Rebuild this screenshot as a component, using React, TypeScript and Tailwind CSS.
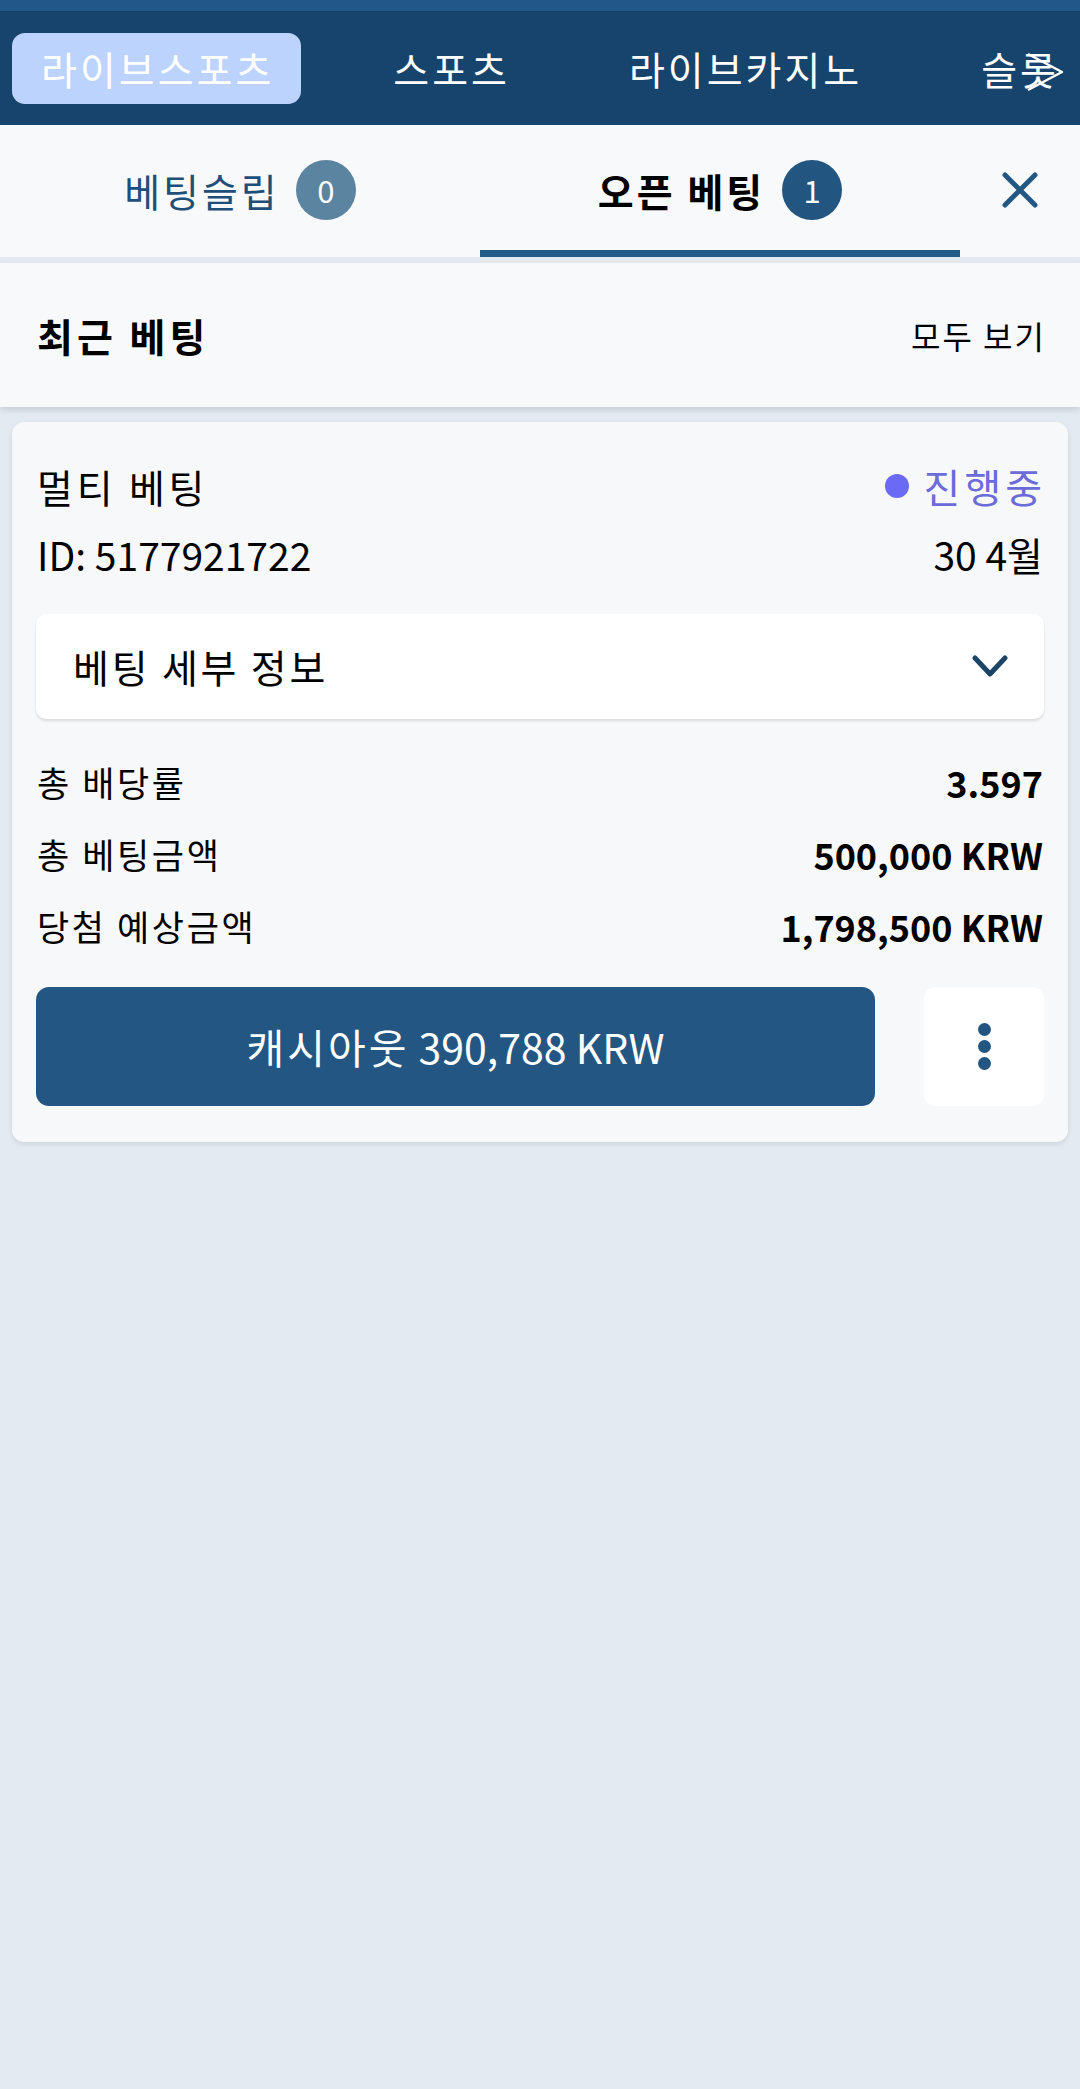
const font = { fontFamily: '"Noto Sans CJK KR", "Noto Sans", sans-serif' };

function NavBar() {
  const items = ["스포츠", "라이브카지노", "슬롯"];
  return (
    <div className="relative bg-[#17446c] border-t-[11px] border-[#22578a] h-[125px] overflow-hidden">
      <div className="flex items-center h-full pl-[12px] whitespace-nowrap text-white text-[39px] tracking-[3px]">
        <div className="h-[71px] pl-[29px] pr-[27px] flex items-center rounded-[13px] bg-[#bcd3fd]">
          라이브스포츠
        </div>
        <div className="flex items-center gap-[119px] ml-[92px]">
          {items.map((item) => (
            <span key={item}>{item}</span>
          ))}
        </div>
      </div>
      <svg
        className="absolute right-[16px] top-[41px]"
        width="40"
        height="40"
        viewBox="0 0 40 40"
        fill="none"
      >
        <path d="M4 2 L38 20 L4 38" stroke="white" strokeWidth="2.5" strokeLinejoin="round" />
      </svg>
    </div>
  );
}

function Badge({ n, active }: { n: number; active: boolean }) {
  return (
    <span
      className={
        active
          ? "w-[60px] h-[60px] rounded-full bg-[#22557f] text-white text-[31px] font-normal tracking-normal flex items-center justify-center"
          : "w-[60px] h-[60px] rounded-full bg-[#5b84a0] text-white text-[31px] font-normal tracking-normal flex items-center justify-center"
      }
    >
      {n}
    </span>
  );
}

function Tabs() {
  return (
    <div className="flex bg-[#f8f9fa] h-[132px]">
      <div className="w-[480px] flex items-center justify-center gap-[16px] text-[39px] tracking-[3px] text-[#1f4e79] pb-[2px]">
        <span>베팅슬립</span>
        <Badge n={0} active={false} />
      </div>
      <div className="w-[480px] relative flex items-center justify-center gap-[17px] text-[39px] tracking-[3px] font-bold text-black pb-[2px]">
        <span>오픈 베팅</span>
        <Badge n={1} active={true} />
        <div className="absolute left-0 right-0 bottom-0 h-[7px] bg-[#245a86]" />
      </div>
      <div className="flex-1 flex items-center justify-center pb-[2px]">
        <svg width="36" height="36" viewBox="0 0 36 36" fill="none">
          <path d="M3 3 L33 33 M33 3 L3 33" stroke="#235783" strokeWidth="5" strokeLinecap="round" />
        </svg>
      </div>
    </div>
  );
}

function Row({ label, value }: { label: string; value: string }) {
  return (
    <div className="h-[72px] flex items-center justify-between text-black">
      <span className="text-[35px] tracking-[2.6px]">{label}</span>
      <span className="text-[36px] font-bold">{value}</span>
    </div>
  );
}

export default function App() {
  return (
    <div className="min-h-[2089px] bg-[#e3eaf2]" style={font}>
      <NavBar />
      <Tabs />
      <div className="mt-[6px] h-[144px] bg-[#f8f9fa] shadow-[0_3px_6px_rgba(0,0,0,0.12)] flex items-center justify-between pl-[37px] pr-[34px]">
        <span className="text-[39px] tracking-[4px] font-bold text-black">최근 베팅</span>
        <span className="text-[32px] tracking-[2px] text-black">모두 보기</span>
      </div>

      <div className="mx-[12px] mt-[15px] bg-[#f7f8f9] rounded-[12px] shadow-[0_2px_5px_rgba(0,0,0,0.1)] px-[24px] pt-[30px] pb-[36px]">
        <div className="h-[68px] flex items-center justify-between">
          <span className="text-[39px] tracking-[3.8px] text-black pl-[1px]">멀티 베팅</span>
          <span className="flex items-center gap-[15px] text-[40px] tracking-[4px] text-[#6b6bd9] -mr-[2px]">
            <span className="w-[24px] h-[24px] rounded-full bg-[#6a6af7]" />
            진행중
          </span>
        </div>
        <div className="h-[68px] flex items-center justify-between text-[39px] text-black">
          <span className="pl-[1px]">ID: 5177921722</span>
          <span className="pr-[1px]">30 4월</span>
        </div>

        <div className="mt-[26px] h-[105px] bg-white rounded-[10px] shadow-[0_2px_3px_rgba(0,0,0,0.12)] flex items-center justify-between pl-[37px] pr-[36px]">
          <span className="text-[39px] tracking-[2.8px] text-black">베팅 세부 정보</span>
          <svg width="36" height="24" viewBox="0 0 36 24" fill="none">
            <path d="M3 3 L18 19 L33 3" stroke="#1b4467" strokeWidth="5" strokeLinecap="round" strokeLinejoin="round" />
          </svg>
        </div>

        <div className="mt-[27px] pl-[1px] pr-[1px]">
          <Row label="총 배당률" value="3.597" />
          <Row label="총 베팅금액" value="500,000 KRW" />
          <Row label="당첨 예상금액" value="1,798,500 KRW" />
        </div>

        <div className="mt-[25px] flex items-center gap-[49px]">
          <button className="w-[839px] h-[119px] rounded-[13px] bg-[#235682] text-white text-[41px]">
            <span className="tracking-[3px]">캐시아웃</span> 390,788 KRW
          </button>
          <button className="w-[120px] h-[119px] rounded-[12px] bg-white flex flex-col items-center justify-center gap-[4px]">
            <span className="w-[13px] h-[13px] rounded-full bg-[#22557f]" />
            <span className="w-[13px] h-[13px] rounded-full bg-[#22557f]" />
            <span className="w-[13px] h-[13px] rounded-full bg-[#22557f]" />
          </button>
        </div>
      </div>
    </div>
  );
}
